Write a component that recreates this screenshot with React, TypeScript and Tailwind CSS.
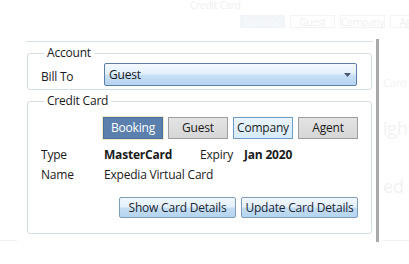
import React from 'react';

const font = { fontFamily: '"Open Sans", "Noto Sans", sans-serif' };

function GhostButton({ label, active }: { label: string; active?: boolean }) {
  return (
    <div
      className={`w-[45px] h-[13px] shrink-0 flex items-center justify-center text-[10px] leading-none border ${
        active ? 'bg-[#f1f4f9] border-[#f1f4f9] text-[#fafbfd]' : 'bg-white border-[#f4f4f4] text-[#f0f0f0]'
      }`}
    >
      {label}
    </div>
  );
}

function SegButton({ label, variant }: { label: string; variant: 'selected' | 'plain' | 'hover' }) {
  const styles = {
    selected: 'bg-[#5b80ae] text-white border-[#4a6f9e] outline outline-1 outline-[#efe9c4]',
    plain: 'bg-gradient-to-b from-[#e4e4e4] to-[#d6d6d6] text-[#1b1b1b] border-[#9e9e9e]',
    hover: 'bg-gradient-to-b from-[#eaf5fd] to-[#d6ebfa] text-[#1b1b1b] border-[#6f9cc5]',
  }[variant];
  return (
    <button
      className={`w-[60px] h-[22px] shrink-0 border text-[12px] tracking-[-0.2px] leading-none whitespace-nowrap flex items-center justify-center ${styles}`}
    >
      {label}
    </button>
  );
}

function AeroButton({ label }: { label: string }) {
  return (
    <button className="w-[117px] h-[21px] shrink-0 border border-[#7f9db9] rounded-[2px] text-[12px] tracking-[-0.2px] leading-none whitespace-nowrap text-[#1c2633] bg-[linear-gradient(to_bottom,#f0f7fd_0%,#e3f0fb_48%,#c4def3_52%,#b4d4ef_100%)] flex items-center justify-center">
      {label}
    </button>
  );
}

export default function App() {
  return (
    <div className="w-[409px] h-[264px] bg-white overflow-hidden flex flex-col text-[#1a1a1a] tracking-[-0.2px]" style={font}>
      {/* faded content behind the popup */}
      <div className="h-[39px] shrink-0">
        <div className="pl-[190px] text-[10px] leading-[10px] text-[#f0f0f0]">Credit Card</div>
        <div className="flex gap-[5px] pl-[240px] mt-[5px]">
          <GhostButton label="Booking" active />
          <GhostButton label="Guest" />
          <GhostButton label="Company" />
          <GhostButton label="Agent" />
        </div>
      </div>

      <div className="flex h-[203px] shrink-0">
        <div className="w-[26px] shrink-0 flex flex-col justify-end pb-[1px]">
          <div className="w-[17px] h-px bg-[#f0f0f0]" />
        </div>

        {/* popup panel */}
        <div className="w-[347px] shrink-0 mt-[2px] border-t border-[#d9e2e7] px-px">
          <fieldset className="mt-[3px] border border-[#d5dee3] rounded-[3px] pl-[13px] pr-[14px] pb-[3px] pt-[2px]">
            <legend className="ml-[3px] px-[3px] text-[12px] leading-[16px]">Account</legend>
            <div className="flex items-center">
              <span className="w-[63px] shrink-0 text-[12px] pt-[4px]">Bill To</span>
              <div className="w-[253px] h-[23px] shrink-0 border border-[#5b7fa6] rounded-[2px] bg-[linear-gradient(to_bottom,#f4f9fe_0%,#e4f0fc_45%,#c8dff6_55%,#b7d3f1_100%)] flex items-center pl-[4px] pr-[4px]">
                <span className="flex-1 text-[12px] leading-none">Guest</span>
                <svg width="7" height="4" viewBox="0 0 7 4" className="mr-[1px]">
                  <path d="M0 0h7L3.5 4z" fill="#4a5a70" />
                </svg>
              </div>
            </div>
          </fieldset>

          <fieldset className="mt-[3px] border border-[#d5dee3] rounded-[3px] pl-[13px] pr-[13px] pb-[15px] pt-[8px]">
            <legend className="ml-[3px] px-[3px] text-[12px] leading-[16px]">Credit Card</legend>
            <div className="flex justify-end gap-[5px]">
              <SegButton label="Booking" variant="selected" />
              <SegButton label="Guest" variant="plain" />
              <SegButton label="Company" variant="hover" />
              <SegButton label="Agent" variant="plain" />
            </div>
            <div className="mt-[6px] text-[12px] leading-[20px]">
              <div className="flex whitespace-nowrap">
                <span className="w-[63px] shrink-0">Type</span>
                <span className="w-[96px] shrink-0 font-bold">MasterCard</span>
                <span className="w-[44px] shrink-0">Expiry</span>
                <span className="font-bold">Jan 2020</span>
              </div>
              <div className="flex whitespace-nowrap">
                <span className="w-[63px] shrink-0">Name</span>
                <span>Expedia Virtual Card</span>
              </div>
            </div>
            <div className="mt-[12px] flex justify-end gap-[5px]">
              <AeroButton label="Show Card Details" />
              <AeroButton label="Update Card Details" />
            </div>
          </fieldset>
        </div>

        <div className="w-[3px] shrink-0" />
        <div className="w-[3px] shrink-0 bg-[#a9a9a9]" />

        {/* faded content to the right */}
        <div className="w-[30px] shrink-0 pl-[4px] flex flex-col text-[#f2f2f2] whitespace-nowrap overflow-hidden">
          <div className="mt-[36px] text-[11px]">Card D</div>
          <div className="mt-[26px] text-[18px] leading-[20px]">ight</div>
          <div className="mt-[38px] text-[18px] leading-[20px]">ed i</div>
          <div className="mt-auto mb-[1px] h-px bg-[#f0f0f0]" />
        </div>
      </div>
    </div>
  );
}
